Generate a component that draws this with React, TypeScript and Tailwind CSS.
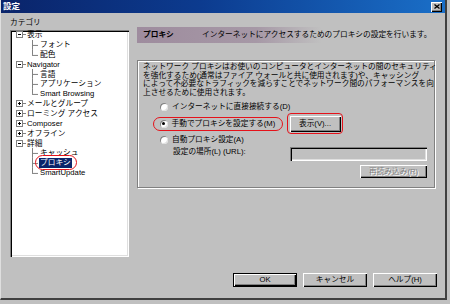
import React from "react";

const F = "font-['Liberation_Sans','Noto_Sans_CJK_JP',sans-serif]";

type Row = { lvl: 0 | 1; exp?: "+" | "-"; t: string; last?: boolean; sel?: boolean };

const rows: Row[] = [
  { lvl: 0, exp: "-", t: "表示" },
  { lvl: 1, t: "フォント" },
  { lvl: 1, t: "配色", last: true },
  { lvl: 0, exp: "-", t: "Navigator" },
  { lvl: 1, t: "言語" },
  { lvl: 1, t: "アプリケーション" },
  { lvl: 1, t: "Smart Browsing", last: true },
  { lvl: 0, exp: "+", t: "メールとグループ" },
  { lvl: 0, exp: "+", t: "ローミング アクセス" },
  { lvl: 0, exp: "+", t: "Composer" },
  { lvl: 0, exp: "+", t: "オフライン" },
  { lvl: 0, exp: "-", t: "詳細" },
  { lvl: 1, t: "キャッシュ" },
  { lvl: 1, t: "プロキシ", sel: true },
  { lvl: 1, t: "SmartUpdate", last: true },
];

function ExpandBox({ plus }: { plus: boolean }) {
  return (
    <svg className="ml-[6px] w-[7px] h-[7px] shrink-0" viewBox="0 0 7 7">
      <rect x="0.5" y="0.5" width="6" height="6" fill="#fff" stroke="#808080" strokeWidth="1" />
      <line x1="2" y1="3.5" x2="5" y2="3.5" stroke="#000" strokeWidth="1" />
      {plus && <line x1="3.5" y1="2" x2="3.5" y2="5" stroke="#000" strokeWidth="1" />}
    </svg>
  );
}

function TreeRow({ r }: { r: Row }) {
  return (
    <div className="relative flex items-center h-[9.86px] text-[7.7px] leading-none whitespace-nowrap">
      {r.lvl === 0 ? (
        <>
          <ExpandBox plus={r.exp === "+"} />
          <div className="w-[3px] h-px bg-[#808080] shrink-0" />
          <span className="ml-[1px]">{r.t}</span>
        </>
      ) : (
        <>
          <svg className="ml-[22px] w-[6px] h-[9.86px] shrink-0" viewBox="0 0 6 10" preserveAspectRatio="none">
            <line x1="0.5" y1="0" x2="0.5" y2={r.last ? 5 : 10} stroke="#808080" strokeWidth="1" />
            <line x1="0" y1="5.5" x2="6" y2="5.5" stroke="#808080" strokeWidth="1" />
          </svg>
          <span
            className={
              r.sel
                ? "ml-[1px] px-[1px] bg-[#0a246a] text-white h-[10px] flex items-center"
                : "ml-[1px] px-[1px]"
            }
          >
            {r.t}
          </span>
          {r.sel && (
            <div className="absolute left-[25px] top-[-3px] w-[42px] h-[15px] border-[1.5px] border-[#e5121a] rounded-full" />
          )}
        </>
      )}
    </div>
  );
}

function Radio({ checked }: { checked?: boolean }) {
  return (
    <div className="w-[8px] h-[8px] rounded-full bg-white shrink-0 flex items-center justify-center shadow-[inset_1px_1px_0_#808080,inset_-1px_-1px_0_#dfdfdf]">
      {checked && <div className="w-[3px] h-[3px] rounded-full bg-black" />}
    </div>
  );
}

function Btn({
  w,
  h,
  children,
  def,
  disabled,
}: {
  w: string;
  h: string;
  children: React.ReactNode;
  def?: boolean;
  disabled?: boolean;
}) {
  return (
    <div className={`${w} ${h} ${def ? "border border-black" : ""} shrink-0`}>
      <div className="w-full h-full bg-[#c0c0c0] flex items-center justify-center text-[7.7px] leading-none whitespace-nowrap shadow-[inset_1px_1px_0_#fff,inset_-1px_-1px_0_#000,inset_-2px_-2px_0_#808080]">
        <span className={disabled ? "text-[#808080] [text-shadow:1px_1px_0_#fff]" : ""}>{children}</span>
      </div>
    </div>
  );
}

export default function App() {
  return (
    <div className={`w-[450px] h-[304px] bg-[#c0c0c0] overflow-hidden text-black ${F}`}>
      <div className="w-[447px] h-[300px] flex flex-col border-l border-l-[#dfdfdf] border-r-2 border-r-[#404040] border-b-2 border-b-[#404040]">
        {/* Title bar */}
        <div className="h-[13px] shrink-0 flex items-center justify-between pl-[2px] pr-[3px] bg-[linear-gradient(to_right,#0a246a_0%,#0c3b8f_45%,#1a6fc8_100%)]">
          <span className="text-white font-bold text-[8.5px] leading-none">設定</span>
          <div className="w-[11px] h-[10px] bg-[#c0c0c0] flex items-center justify-center shadow-[inset_1px_1px_0_#fff,inset_-1px_-1px_0_#000,inset_-2px_-2px_0_#808080]">
            <svg className="w-[6px] h-[5px]" viewBox="0 0 6 5">
              <path d="M0.5 0.5 L5.5 4.5 M5.5 0.5 L0.5 4.5" stroke="#000" strokeWidth="1.3" />
            </svg>
          </div>
        </div>

        {/* Body */}
        <div className="flex flex-1">
          {/* Left column */}
          <div className="w-[136px] shrink-0 pt-[5px] pl-[9px] flex flex-col">
            <div className="h-[10px] leading-[10px] text-[7.7px]">カテゴリ</div>
            <div className="mt-[2px] w-[119px] h-[227px] bg-white shadow-[inset_1px_1px_0_#808080,inset_2px_2px_0_#000,inset_-1px_-1px_0_#fff,inset_-2px_-2px_0_#dfdfdf] overflow-hidden">
              {rows.map((r, i) => (
                <TreeRow key={i} r={r} />
              ))}
            </div>
          </div>

          {/* Right column */}
          <div className="w-[301px] shrink-0 pt-[14px] flex flex-col">
            <div className="w-[298px] h-[16px] flex items-center pl-[6px] text-[7.7px] leading-none whitespace-nowrap bg-[linear-gradient(to_right,#9e8c9e_0%,#a698a6_40%,#c0c0c0_62%)]">
              <span className="font-bold w-[59px]">プロキシ</span>
              <span>インターネットにアクセスするためのプロキシの設定を行います。</span>
            </div>

            <div className="mt-[17px] w-[298px] h-[128px] border border-[#808080] shadow-[inset_1px_1px_0_#fff,1px_1px_0_#fff] pl-[5px] pr-[7px] pt-[2px] flex flex-col">
              <div className="text-[7.7px] leading-[8.5px] whitespace-nowrap">
                <div>ネットワーク プロキシはお使いのコンピュータとインターネットの間のセキュリティ</div>
                <div>を強化するため(通常はファイア ウォールと共に使用されます)や、キャッシング</div>
                <div>によって不必要なトラフィックを減らすことでネットワーク間のパフォーマンスを向</div>
                <div>上させるために使用されます。</div>
              </div>

              <div className="mt-[5px] h-[10px] flex items-center pl-[17px] gap-[4px] text-[7.7px] leading-none whitespace-nowrap">
                <Radio />
                <span>インターネットに直接接続する(D)</span>
              </div>

              <div className="mt-[1px] h-[21px] flex items-center">
                <div className="ml-[10px] w-[130px] h-[14px] border-[1.5px] border-[#e5121a] rounded-full flex items-center pl-[5.5px] gap-[4px] text-[7.7px] leading-none whitespace-nowrap">
                  <Radio checked />
                  <span>手動でプロキシを設定する(M)</span>
                </div>
                <div className="ml-[4px] w-[56px] h-[21px] border-[1.5px] border-[#e5121a] rounded-[4px] p-[1.5px]">
                  <Btn w="w-full" h="h-full">
                    表示(V)...
                  </Btn>
                </div>
              </div>

              <div className="mt-[0.5px] h-[10px] flex items-center pl-[17px] gap-[4px] text-[7.7px] leading-none whitespace-nowrap">
                <Radio />
                <span>自動プロキシ設定(A)</span>
              </div>

              <div className="mt-[2.5px] h-[14px] flex items-start">
                <span className="ml-[30px] pt-[1px] text-[7.7px] leading-[8.5px] whitespace-nowrap">設定の場所(L) (URL):</span>
                <div className="ml-auto w-[137px] h-[14px] bg-[#c0c0c0] shadow-[inset_1px_1px_0_#808080,inset_2px_2px_0_#000,inset_-1px_-1px_0_#fff,inset_-2px_-2px_0_#dfdfdf]" />
              </div>

              <div className="mt-[4px] flex justify-end">
                <Btn w="w-[67px]" h="h-[13px]" disabled>
                  再読み込み(R)
                </Btn>
              </div>
            </div>

            <div className="mt-[85px] flex justify-end gap-[6px] pr-[1px]">
              <Btn w="w-[64px]" h="h-[14px]" def>
                OK
              </Btn>
              <Btn w="w-[64px]" h="h-[14px]">
                キャンセル
              </Btn>
              <Btn w="w-[64px]" h="h-[14px]">
                ヘルプ(H)
              </Btn>
            </div>
          </div>
        </div>
      </div>
    </div>
  );
}
